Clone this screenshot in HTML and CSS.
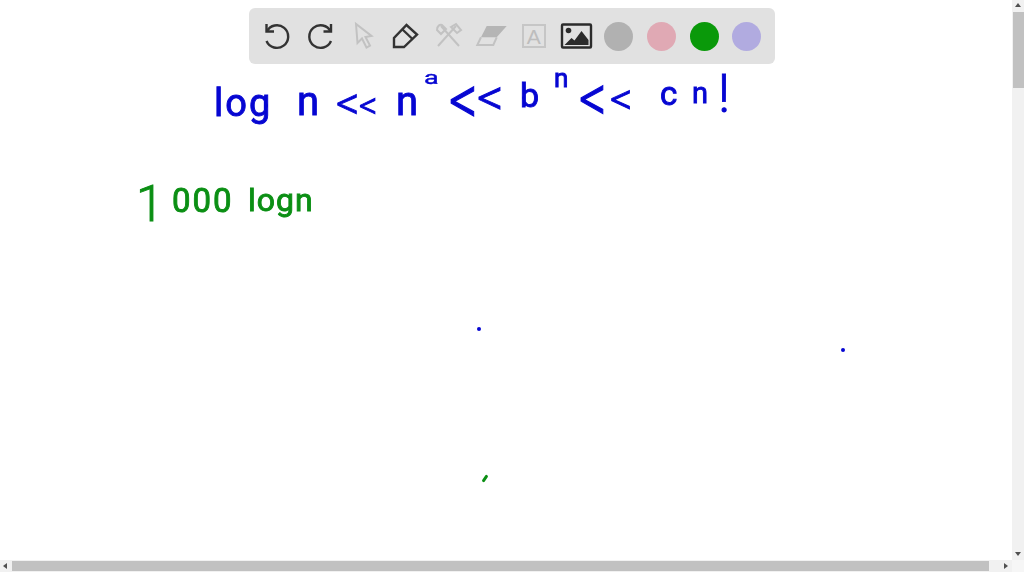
FILE: index.html
```html
<!DOCTYPE html>
<html lang="en">
<head>
<meta charset="utf-8">
<title>Whiteboard</title>
<link rel="stylesheet" href="styles.css">
</head>
<body>
<div class="page">
  <main class="board">
    <span class="ink blue log1">log</span>
    <span class="ink blue n1">n</span>
    <span class="ink blue ll1">&lt;</span>
    <span class="ink blue ll2">&lt;</span>
    <span class="ink blue n2">n</span>
    <span class="ink blue a1">a</span>
    <span class="ink blue ll3 tall">&lt;</span>
    <span class="ink blue ll4">&lt;</span>
    <span class="ink blue b1">b</span>
    <span class="ink blue n3">n</span>
    <span class="ink blue ll5 tall">&lt;</span>
    <span class="ink blue ll6">&lt;</span>
    <span class="ink blue c1">c</span>
    <span class="ink blue n4">n</span>
    <span class="ink blue bang">!</span>
    <span class="ink green one">1</span>
    <span class="ink green zeros">000</span>
    <span class="ink green log2">logn</span>
    <i class="dot dot-a"></i>
    <i class="dot dot-b"></i>
    <i class="tick"></i>
  </main>
  <div class="vbar">
    <i class="arrow up"></i>
    <div class="vtrack"><div class="vthumb"></div></div>
    <i class="arrow down"></i>
  </div>
  <div class="hbar">
    <i class="arrow left"></i>
    <div class="htrack"><div class="hthumb"></div></div>
    <i class="arrow right"></i>
  </div>
  <div class="corner"></div>
</div>
<nav class="toolbar">
  <span class="tool"><svg viewBox="0 0 30 30" class="ic dark"><path d="M3.500 3v7.500H11"/><path d="M3.800 10.500A11.300 11.300 0 1 1 3.500 20"/></svg></span>
  <span class="tool"><svg viewBox="0 0 30 30" class="ic dark"><path d="M25 3v7.500h-7.500"/><path d="M24.700 10.500A11.300 11.300 0 1 0 25 20"/></svg></span>
  <span class="tool"><svg viewBox="0 0 30 30" class="ic faint thin"><path d="M8 3l1.500 19 4.500-4.500 4.500 9 3.500-2-4.500-8.500 6-1z"/></svg></span>
  <span class="tool"><svg viewBox="0 0 30 30" class="ic dark"><path d="M3 26v-9L15.500 4 26 13.500 13 26z"/><path d="M11.500 8.500l10 9.500"/></svg></span>
  <span class="tool"><svg viewBox="0 0 30 30" class="ic faint thin"><path d="M7 5l18 20M3 9l4 4 5-5-4-4c-2-1-5 1-5 5z"/><path d="M22 5L4 25"/><path d="M17 6l5-3 5 6-4 3z"/></svg></span>
  <span class="tool"><svg viewBox="0 0 30 30" class="ic faint thin"><path class="fill" d="M10.700 5h20L20.700 16.300H5z"/><path d="M5 16.300L1.300 24h16l3.400-7.700"/></svg></span>
  <span class="tool"><span class="textbox">A</span></span>
  <span class="tool"><svg viewBox="0 0 30 30" class="ic image"><rect x="1" y="3.500" width="29" height="23" rx="1"/><circle class="solid" cx="7.500" cy="9.500" r="2.800"/><path class="solid" d="M3.500 24l7-7 3 2.500L20.500 10l7 9v5z"/></svg></span>
  <span class="tool"><i class="swatch gray"></i></span>
  <span class="tool"><i class="swatch pink"></i></span>
  <span class="tool"><i class="swatch grn"></i></span>
  <span class="tool"><i class="swatch lav"></i></span>
</nav>
</body>
</html>
```
FILE: styles.css
```css
html, body {
  margin: 0;
  height: 100%;
  overflow: hidden;
  background: #fff;
}
.page {
  width: 1024px;
  height: 572px;
  display: grid;
  grid-template-columns: 1012px 12px;
  grid-template-rows: 560px 12px;
}
.board {
  position: relative;
  overflow: hidden;
  background: #fff;
}

/* scrollbars */
.vbar, .hbar {
  background: #f1f1f1;
  display: flex;
}
.vbar { flex-direction: column; }
.vtrack { flex: 1; padding-left: 1px; }
.vthumb { width: 11px; height: 76px; background: #c1c1c1; }
.htrack { flex: 1; padding-top: 1px; }
.hthumb { width: 977px; height: 10px; background: #c1c1c1; }
.corner { background: #f6f6f6; }
.arrow {
  flex: none;
  width: 12px;
  height: 12px;
  display: block;
  position: relative;
}
.arrow::after {
  content: "";
  position: absolute;
  border: 3.500px solid transparent;
}
.up::after { left: 2.500px; top: 0; border-bottom: 4px solid #505050; }
.down::after { left: 2.500px; top: 4px; border-top: 4px solid #505050; }
.left::after { left: 0; top: 2.500px; border-right: 4px solid #505050; }
.right::after { left: 4px; top: 2.500px; border-left: 4px solid #505050; }

/* toolbar */
.toolbar {
  position: absolute;
  left: 249px;
  top: 8px;
  width: 526px;
  height: 56px;
  box-sizing: border-box;
  padding: 0 7px 0 8px;
  display: grid;
  grid-template-columns: repeat(12, 1fr);
  align-items: center;
  background: #e1e1e1;
  border-radius: 6px;
}
.tool {
  display: flex;
  align-items: center;
  justify-content: center;
}
.ic {
  width: 30px;
  height: 30px;
  fill: none;
  stroke-width: 2.400;
  stroke-linejoin: miter;
  overflow: visible;
  filter: blur(0.3px);
}
.dark { stroke: #333; }
.faint { stroke: #c2c2c2; }
.thin { stroke-width: 2; }
.fill { fill: #b5b5b5; stroke: none; }
.image { stroke: #2b2b2b; }
.solid { fill: #2b2b2b; stroke: none; }
.textbox {
  box-sizing: border-box;
  width: 24px;
  height: 24px;
  border: 2px solid #c6c6c6;
  display: flex;
  align-items: center;
  justify-content: center;
  font: 21px/1 "Liberation Sans", sans-serif;
  color: #bdbdbd;
}
.swatch {
  width: 29px;
  height: 29px;
  border-radius: 50%;
  display: block;
}
.gray { background: #b1b1b1; }
.pink { background: #e0a9b4; }
.grn { background: #0a990a; }
.lav { background: #b1abe0; }

/* ink on the free canvas */
.ink {
  position: absolute;
  font-family: Roboto, sans-serif;
  font-weight: 400;
  line-height: 1;
  white-space: pre;
  -webkit-text-stroke: 0.900px currentColor;
  filter: blur(0.3px);
}
.blue { color: #0606d2; }
.green { color: #0b8f14; }
.tall { transform: scaleY(1.25); font-weight: 300; }
.log1 { left: 214px; top: 84px; font-size: 38px; letter-spacing: 2px; }
.n1 { left: 297px; top: 82px; font-size: 40px; }
.ll1 { left: 336px; top: 80px; font-size: 46px; font-weight: 300; }
.ll2 { left: 359px; top: 88px; font-size: 36px; font-weight: 300; }
.n2 { left: 396px; top: 82px; font-size: 40px; }
.a1 { left: 424px; top: 69px; font-size: 18px; transform: scaleX(1.5); transform-origin: left; -webkit-text-stroke-width: 0.400px; }
.ll3 { left: 449px; top: 72px; font-size: 56px; }
.ll4 { left: 477px; top: 72px; font-size: 52px; font-weight: 300; }
.b1 { left: 520px; top: 78px; font-size: 34px; }
.n3 { left: 554px; top: 65px; font-size: 26px; }
.ll5 { left: 579px; top: 71px; font-size: 54px; }
.ll6 { left: 610px; top: 77px; font-size: 44px; font-weight: 300; }
.c1 { left: 660px; top: 77px; font-size: 33px; }
.n4 { left: 692px; top: 79px; font-size: 29px; }
.bang { left: 718px; top: 68px; font-size: 53px; font-weight: 300; }
.one { left: 136px; top: 179px; font-size: 50px; font-weight: 300; }
.zeros { left: 172px; top: 184px; font-size: 33px; letter-spacing: 2px; }
.log2 { left: 248px; top: 184px; font-size: 32px; letter-spacing: 1px; }
.dot {
  position: absolute;
  width: 4px;
  height: 4px;
  border-radius: 50%;
  background: #0606d2;
}
.dot-a { left: 477px; top: 327px; }
.dot-b { left: 841px; top: 348px; }
.tick {
  position: absolute;
  left: 480.500px;
  top: 476.500px;
  width: 8px;
  height: 3px;
  border-radius: 2px;
  background: #0b8f14;
  transform: rotate(-55deg);
}
```
